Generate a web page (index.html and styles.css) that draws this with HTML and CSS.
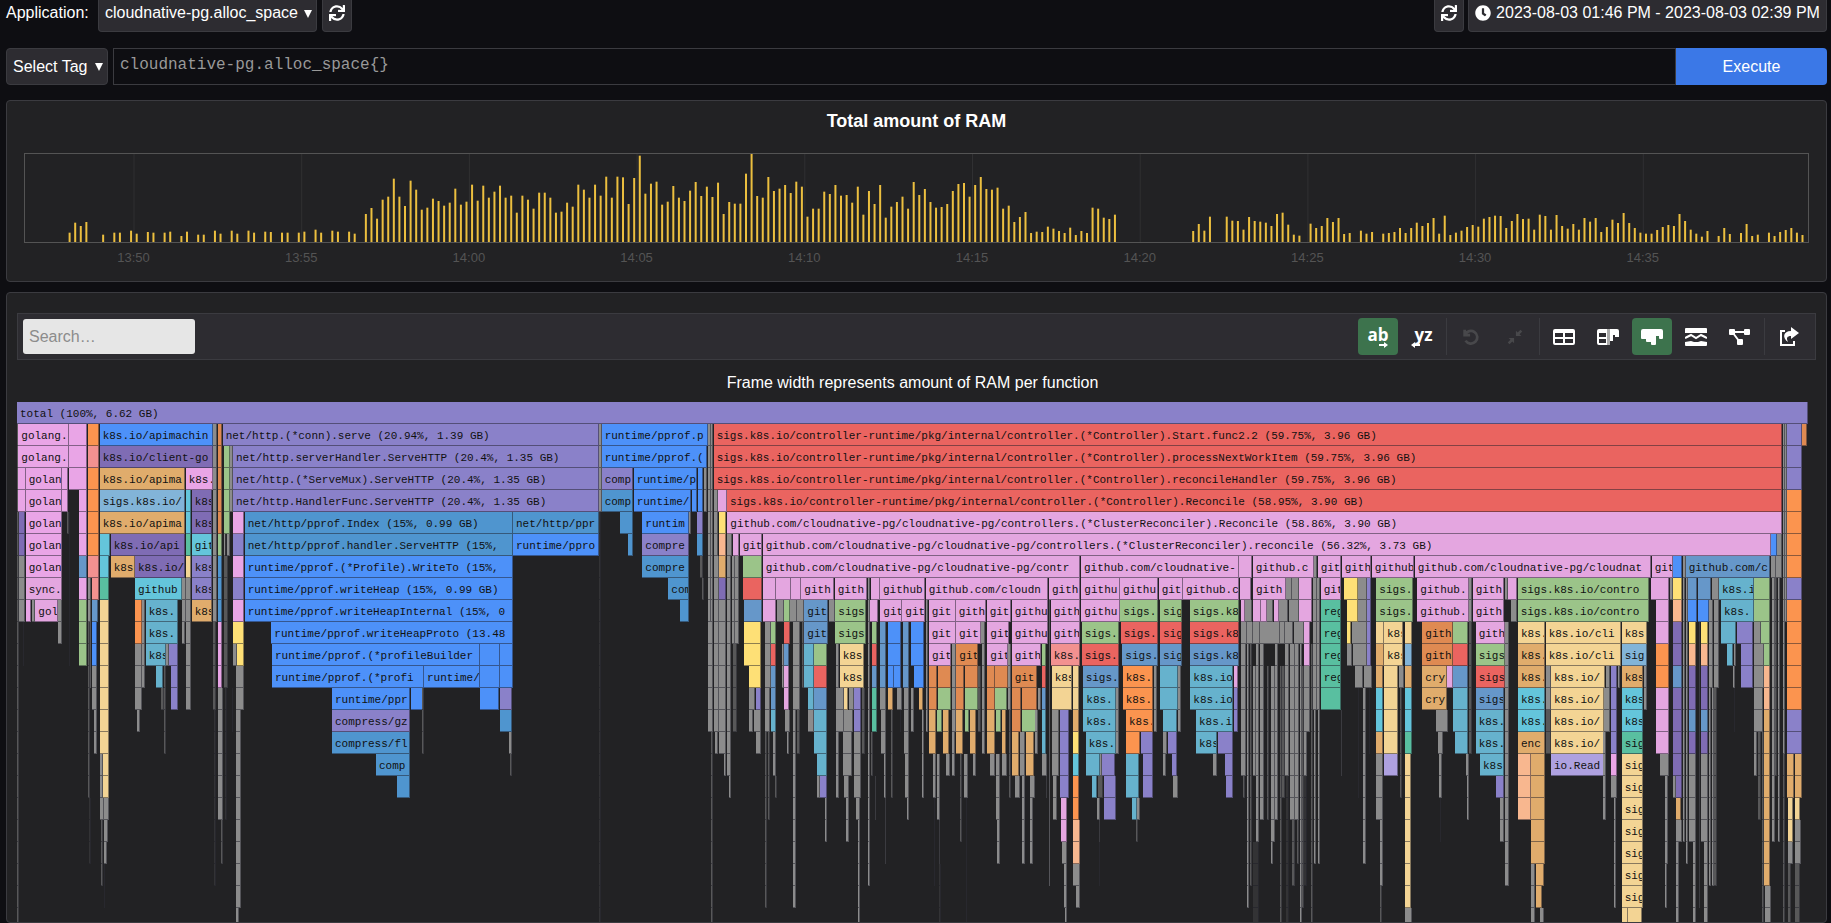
FILE: index.html
```html
<!DOCTYPE html>
<html lang="en">
<head>
<meta charset="utf-8">
<title>cloudnative-pg.alloc_space</title>
<link rel="stylesheet" href="styles.css">
</head>
<body>
<svg class="defs" aria-hidden="true">
  <symbol id="sync" viewBox="0 0 512 512"><path d="M440.65 12.57l4 82.77A247.16 247.16 0 0 0 255.83 8C134.73 8 33.91 94.92 12.29 209.82A12 12 0 0 0 24.09 224h49.05a12 12 0 0 0 11.67-9.26 175.91 175.91 0 0 1 317-56.94l-101.46-4.86a12 12 0 0 0-12.57 12v47.41a12 12 0 0 0 12 12H500a12 12 0 0 0 12-12V12a12 12 0 0 0-12-12h-47.37a12 12 0 0 0-11.98 12.57zM255.83 432a175.61 175.61 0 0 1-146-77.8l101.8 4.87a12 12 0 0 0 12.57-12v-47.4a12 12 0 0 0-12-12H12a12 12 0 0 0-12 12V500a12 12 0 0 0 12 12h47.35a12 12 0 0 0 12-12.6l-4.15-82.57A247.17 247.17 0 0 0 255.83 504c121.11 0 221.93-86.92 243.55-201.82a12 12 0 0 0-11.8-14.18h-49.05a12 12 0 0 0-11.67 9.26A175.86 175.86 0 0 1 255.83 432z"/></symbol>
</svg>
<header class="topbar">
  <label class="app-label" for="app">Application:</label>
  <span class="dropdown app">
    <select id="app" class="control"><option>cloudnative-pg.alloc_space</option></select>
  </span>
  <button class="control square" type="button" aria-label="Refresh applications"><svg class="icon"><use href="#sync"/></svg></button>
  <span class="spacer"></span>
  <button class="control square" type="button" aria-label="Refresh data"><svg class="icon"><use href="#sync"/></svg></button>
  <button class="control range" type="button"><svg class="icon" viewBox="0 0 512 512"><path d="M256 8C119 8 8 119 8 256s111 248 248 248 248-111 248-248S393 8 256 8zm57.100 350.100L224.900 294c-3.100-2.300-4.900-5.900-4.900-9.700V116c0-6.600 5.400-12 12-12h48c6.600 0 12 5.400 12 12v137.700l63.500 46.200c5.400 3.900 6.500 11.400 2.600 16.800l-28.200 38.800c-3.900 5.300-11.400 6.500-16.800 2.600z"/></svg>2023-08-03 01:46 PM - 2023-08-03 02:39 PM</button>
</header>
<form class="query">
  <span class="dropdown tag">
    <select class="control" aria-label="Select tag"><option>Select Tag</option></select>
  </span>
  <input class="query-input" type="text" aria-label="Query" value="cloudnative-pg.alloc_space{}" spellcheck="false">
  <button class="execute" type="button">Execute</button>
</form>
<section class="panel timeline">
  <h1 class="panel-title">Total amount of RAM</h1>
  <svg class="chart" id="chart" role="img" aria-label="Total amount of RAM over time"></svg>
</section>
<section class="panel profile">
  <div class="toolbar">
    <input class="search" type="search" placeholder="Search…" aria-label="Search">
    <span class="spacer"></span>
    <button class="tool active" type="button" aria-label="Head first"><span class="tool-text">ab</span><svg class="arrow right" viewBox="0 0 10 6"><path d="M0 2h5V0l4 3-4 3V4H0z"/></svg></button>
    <button class="tool tail" type="button" aria-label="Tail first"><span class="tool-text">yz</span><svg class="arrow left" viewBox="0 0 10 6"><path d="M9 2H4V0L0 3l4 3V4h5z"/></svg></button>
    <i class="divider"></i>
    <button class="tool" type="button" disabled aria-label="Reset view"><svg viewBox="0 0 22 22"><path class="line" d="M4 3v6h6M4.500 8.500A7 7 0 1 1 5 15"/></svg></button>
    <button class="tool" type="button" disabled aria-label="Collapse nodes"><svg viewBox="0 0 22 22"><path d="M12 4v6h6l-2-2 3-3-2-2-3 3zM10 18v-6H4l2 2-3 3 2 2 3-3z"/></svg></button>
    <i class="divider"></i>
    <button class="tool" type="button" aria-label="Table"><svg viewBox="0 0 22 18"><path fill-rule="evenodd" d="M2 1h18a2 2 0 0 1 2 2v12a2 2 0 0 1-2 2H2a2 2 0 0 1-2-2V3a2 2 0 0 1 2-2zM2 5v4h8V5zM12 5v4h8V5zM2 11v4h8v-4zM12 11v4h8v-4z"/></svg></button>
    <button class="tool" type="button" aria-label="Table and flamegraph"><svg viewBox="0 0 22 18"><path fill-rule="evenodd" d="M2 1h8v16H2a2 2 0 0 1-2-2V3a2 2 0 0 1 2-2zM2 5v4h7V5zM2 11v4h7v-4z"/><path class="shade" d="M10 1h3v16h-3z"/><path d="M13 1h7a2 2 0 0 1 2 2v6h-4V7h-2v6h-3z"/></svg></button>
    <button class="tool active" type="button" aria-label="Flamegraph"><svg viewBox="0 0 22 18"><path d="M2 1h18a2 2 0 0 1 2 2v7a1 1 0 0 1-1 1h-2a1 1 0 0 1-1-1V8h-3v8a1 1 0 0 1-1 1h-3a1 1 0 0 1-1-1v-2H6a1 1 0 0 1-1-1v-2H1a1 1 0 0 1-1-1V3a2 2 0 0 1 2-2z"/></svg></button>
    <button class="tool" type="button" aria-label="Sandwich"><svg viewBox="0 0 22 18"><path d="M1 0h20a1 1 0 0 1 1 1v4H0V1a1 1 0 0 1 1-1zM0 14l6-1 3 1h4l3-1 6 1v3a1 1 0 0 1-1 1H1a1 1 0 0 1-1-1z"/><path class="line" d="M0 10l2-1 4-2 5 3 5-3 4 2 2 1"/></svg></button>
    <button class="tool" type="button" aria-label="Graph"><svg viewBox="0 0 22 18"><path d="M1 1h4a1 1 0 0 1 1 1v4a1 1 0 0 1-1 1H1a1 1 0 0 1-1-1V2a1 1 0 0 1 1-1zM16 1h4a1 1 0 0 1 1 1v4a1 1 0 0 1-1 1h-4a1 1 0 0 1-1-1V2a1 1 0 0 1 1-1zM9 11h4a1 1 0 0 1 1 1v4a1 1 0 0 1-1 1H9a1 1 0 0 1-1-1v-4a1 1 0 0 1 1-1z"/><path class="line" d="M5 4h11M4 5l6 8"/></svg></button>
    <i class="divider"></i>
    <button class="tool" type="button" aria-label="Export"><svg viewBox="0 0 22 20"><path class="line" d="M7 4H3v14h13v-4"/><path d="M13 0l8 6-8 6V9c-4 0-5 2-3 6-6-4-5-11 3-11z"/></svg></button>
  </div>
  <h2 class="graph-title">Frame width represents amount of RAM per function</h2>
  <div class="flame" id="flame"></div>
</section>
<script src="script.js"></script>
</body>
</html>
```
FILE: styles.css
```css
* { box-sizing: border-box; }

html { height: 100%; }

body {
  display: flex;
  flex-direction: column;
  height: 100vh;
  margin: 0;
  padding: 0 4px 0 6px;
  overflow: hidden;
  background: #0e0e12;
  color: #fff;
  font: 16px/20px "Liberation Sans", Arial, sans-serif;
}

button, input, select { font: inherit; color: inherit; margin: 0; }

.defs { position: absolute; width: 0; height: 0; }
.spacer { flex: 1; }

.icon { width: 16px; height: 16px; fill: #fff; flex: none; }

.control {
  display: flex;
  align-items: center;
  justify-content: center;
  height: 100%;
  padding: 0 7px;
  border: 1px solid #3b3b40;
  border-radius: 4px;
  background: #2d2c31;
  appearance: none;
}

.dropdown { position: relative; display: block; height: 100%; }
.dropdown .control { width: 100%; padding: 0 6px; }
.dropdown::after {
  content: "";
  position: absolute;
  right: 5px;
  bottom: 14px;
  border: 4px solid transparent;
  border-top: 8px solid #fff;
  border-bottom: 0;
  pointer-events: none;
}

.topbar { display: flex; flex: none; align-items: stretch; height: 32px; }
.topbar .control { border-top: 0; border-radius: 0 0 4px 4px; padding-bottom: 6px; }
.topbar .app .control { padding-bottom: 5px; }
.app-label { width: 92px; line-height: 26px; }
.app { width: 219px; margin-right: 5px; }
.square { width: 30px; }
.range { margin-left: 4px; gap: 5px; width: 359px; padding: 0 6px; }

.query { display: flex; flex: none; height: 37px; margin: 16px 0 15px; }
.tag { width: 102px; margin-right: 5px; }
.query-input {
  flex: 1;
  min-width: 0;
  padding: 0 6px 4px;
  border: 1px solid #3b3b40;
  border-radius: 0;
  background: #0e0e12;
  color: #999;
  font-family: "Liberation Mono", monospace;
}
.execute {
  width: 151px;
  border: 0;
  border-radius: 0 4px 4px 0;
  background: #3b78e7;
}

.panel {
  background: #222224;
  border: 1px solid #3b3b40;
  border-radius: 4px;
}

.timeline { flex: none; height: 182px; margin-bottom: 10px; padding: 10px 17px 0; }
.panel-title { margin: 0 0 22px; font-size: 18px; line-height: 20px; text-align: center; }
.chart { display: block; width: 100%; height: 120px; overflow: visible; }
.chart .frame { fill: none; stroke: #545454; width: calc(100% - 1px); }
.chart .grid { fill: #303032; }
.chart .bar { fill: #ecbf3f; }
.chart text { fill: #545454; font-size: 13px; text-anchor: middle; }

.profile { flex: 1; min-height: 0; padding: 20px 10px 0; overflow: hidden; }
.toolbar {
  display: flex;
  align-items: center;
  gap: 4px;
  height: 47px;
  padding: 0 6px 0 5px;
  border: 1px solid #3b3b40;
  background: #2d2c31;
}
.search {
  width: 172px;
  height: 35px;
  padding: 0 6px;
  border: 0;
  border-radius: 3px;
  background: #e6e6e6;
  color: #222;
}
.search::placeholder { color: #8c8c8c; }
.tool {
  position: relative;
  display: flex;
  align-items: center;
  justify-content: center;
  width: 40px;
  height: 37px;
  padding: 0;
  border: 0;
  border-radius: 4px;
  background: none;
}
.tool.active { background: #3d734d; }
.tool svg { width: 22px; height: 20px; fill: #fff; }
.tool:disabled svg { fill: #48484b; width: 20px; }
.tool .line { fill: none; stroke: #fff; stroke-width: 2; }
.tool:disabled .line { stroke: #48484b; stroke-width: 3; }
.tool .shade { fill: #aaa; }
.tool-text { font: 700 17px/20px "Open Sans", sans-serif; padding-bottom: 4px; }
.tail .tool-text { padding-left: 3px; }
.tool .arrow { position: absolute; bottom: 7px; width: 10px; height: 6px; }
.tool .right { right: 9px; }
.tool .left { left: 9px; }
.divider { width: 1px; height: 37px; background: #3b3b40; }

.graph-title { margin: 11px 8px 7px 0; font-size: 16px; font-weight: 400; line-height: 24px; text-align: center; }

.flame { margin-right: 8px; }
.row { position: relative; height: 22px; overflow: hidden; }
.cell {
  position: absolute;
  top: 0;
  height: 100%;
  padding-left: 3px;
  overflow: hidden;
  border: 0 solid rgba(30, 30, 40, .5);
  border-width: 0 1px 1px 0;
  color: #111;
  font: 11px/24px "Liberation Mono", monospace;
  white-space: pre;
}
```
FILE: script.js
```js
const NS = 'http://www.w3.org/2000/svg';
const chart = document.getElementById('chart');

function svg(tag, attrs, text) {
  const el = document.createElementNS(NS, tag);
  for (const k in attrs) el.setAttribute(k, attrs[k]);
  if (text) el.textContent = text;
  chart.appendChild(el);
}

const SPAN = 1785;
const BASE = 89;
const pct = (v, total) => (v / total * 100).toFixed(3) + '%';

// first sample slot, then consecutive heights in thirds of a pixel
const samples = [
  [0, 28, 58, 48, 60], [6, 22], [8, 28, 28], [11, 34, 25], [14, 30, 28], [17, 28, 31],
  [20, 18, 31], [23, 22, 22], [26, 34, 25], [29, 34, 25], [32, 34, 28], [35, 31, 30],
  [38, 28, 28], [41, 28, 31], [44, 37, 28], [47, 34, 31], [50, 31, 25],
  [53, 84, 102, 70, 127, 136, 190, 136, 108, 184, 157, 97, 103, 130, 123, 109, 118, 160, 112,
    121, 172, 124, 169, 133, 151, 169, 133, 139, 88, 139, 127, 100, 148, 148, 133, 88, 91, 118,
    106, 172, 157, 133, 172, 139, 196, 133, 196],
  [99, 194, 114, 192, 259, 145, 175, 181, 112, 121, 168, 133, 123, 154, 180, 138, 166, 135, 178,
    84, 120, 115, 115, 205, 264, 138, 133, 195, 153, 160, 171, 147, 181, 166, 76, 100, 100, 151,
    144, 171, 139, 141, 118, 166, 82, 153, 114, 171, 73, 106, 120, 136, 100, 180, 141, 159, 120,
    103, 105, 114, 153, 174, 177, 136, 171, 195, 159, 157, 163, 100, 109, 60, 75, 90, 27, 31, 30,
    46, 40, 33, 27, 43, 21, 33, 27, 103, 100, 73, 69, 82],
  [201, 33, 54, 34, 76], [207, 76, 64, 63, 37, 75, 63, 61, 58, 48, 84, 88, 52, 22, 19],
  [222, 55, 42, 48, 72, 60, 72, 24, 27], [231, 34, 25, 30],
  [235, 25, 27, 30, 42, 27, 42, 58, 48, 57, 72, 25, 79, 21, 28, 34, 45, 51, 46, 70, 75, 79, 78,
    42, 63, 84, 69, 70, 37, 82, 78, 37, 81, 48, 40, 54, 37, 72, 61, 72, 30, 45, 67, 57, 87, 57,
    42, 28, 25, 25, 36, 45, 51, 48, 84, 63, 37, 25, 16, 33],
  [295, 18, 42, 24], [299, 27, 54, 18, 22], [304, 28, 18, 30, 36, 42, 28, 21],
];

for (let i = 0; i < 10; i++) {
  const x = 109.5 + i * 167.7;
  svg('rect', { class: 'grid', x: pct(x, SPAN), y: 1, width: 1, height: BASE - 1 });
  const minutes = 50 + i * 5;
  const label = (13 + Math.floor(minutes / 60)) + ':' + String(minutes % 60).padStart(2, '0');
  svg('text', { x: pct(x, SPAN), y: 109 }, label);
}
for (const [start, ...heights] of samples) {
  heights.forEach((h, i) => {
    const x = 44.6 + (start + i) * 5.59;
    svg('rect', { class: 'bar', x: pct(x, SPAN), y: BASE - h / 3, width: 2, height: h / 3 });
  });
}
svg('rect', { class: 'frame', x: 0.5, y: 0.5, height: BASE });

const COLORS = {
  P: '#8a81c9', K: '#e9a5e6', G: '#e4a6e0', B: '#4d91f9', U: '#4f95cf', R: '#ea6460',
  O: '#fb944f', o: '#df8a52', T: '#e0ac6c', W: '#f3d494', V: '#7f6cb4', C: '#64c5db',
  c: '#66b2cd', g: '#9bc489', e: '#59bfa0', S: '#6697c9', L: '#82b4d8', Y: '#fee076',
  p: '#f8b78f', s: '#f29190', l: '#aea1e0', x: '#8c8c8c', d: '#585859', f: '#333335',
};

// Each line: left, right, first row, last row, colour, label.
// Left and right are ticks counted from the group's own origin.
const TICKS = 5373;
const groups = [
[-51, `
51 5424 0 0 P total (100%, 6.62 GB)
51 57 1 23 d
55 206 1 2 K golang.
207 262 1 3 K
263 298 1 1 O
299 639 1 1 B k8s.io/apimachin
639 652 1 6 x
653 667 1 5 o
668 1796 1 1 P net/http.(*conn).serve (20.94%, 1.39 GB)
263 298 2 2 s
299 639 2 2 V k8s.io/client-go
671 690 2 5 g
691 699 2 4 x
699 1796 2 2 P net/http.serverHandler.ServeHTTP (20.4%, 1.35 GB)
55 77 3 4 K
77 187 3 7 K golan
187 205 3 4 K
263 298 3 6 O
299 556 3 3 T k8s.io/apima
557 639 3 3 K k8s.
699 1796 3 3 P net/http.(*ServeMux).ServeHTTP (20.4%, 1.35 GB)
238 260 4 6 K
299 556 4 4 L sigs.k8s.io/
557 574 4 5 C
575 637 4 5 V k8s
699 1796 4 4 P net/http.HandlerFunc.ServeHTTP (20.4%, 1.35 GB)
56 74 5 6 V
200 206 5 5 d
299 556 5 5 T k8s.io/apima
699 733 5 5 K
734 1538 5 5 U net/http/pprof.Index (15%, 0.99 GB)
1539 1796 5 5 U net/http/ppr
299 331 6 6 C
332 556 6 6 V k8s.io/api
557 574 6 6 e
575 637 6 6 C git
653 667 6 6 g
672 690 6 6 x
699 733 6 6 P
734 1538 6 6 U net/http/pprof.handler.ServeHTTP (15%,
1539 1796 6 6 B runtime/ppro
56 74 7 9 x
238 260 7 7 S
263 298 7 7 s
299 328 7 7 C
332 404 7 7 T k8s
405 556 7 7 V k8s.io/
557 573 7 7 W
575 637 7 8 P k8s
639 650 7 9 x
653 667 7 9 U
699 733 7 7 K
734 1538 7 7 B runtime/pprof.(*Profile).WriteTo (15%,
77 187 8 8 G sync.
238 260 8 8 K
263 274 8 12 x
275 296 8 8 s
299 328 8 8 e
405 545 8 8 C github
545 557 8 9 x
557 573 8 9 x
699 733 8 8 P
734 1538 8 8 B runtime/pprof.writeHeap (15%, 0.99 GB)
78 94 9 9 K
95 105 9 9 x
106 173 9 9 G gol
173 187 9 10 x
238 260 9 11 g
275 295 9 9 S
299 328 9 15 W
405 425 9 10 O
426 436 9 12 x
437 534 9 10 c k8s.
575 637 9 9 T k8s
699 733 9 9 K
734 1538 9 9 B runtime/pprof.writeHeapInternal (15%, 0
69 73 10 11 f
206 210 5 11 f
275 292 10 11 B
545 556 10 10 x
557 573 10 13 x
653 666 10 12 K
699 732 10 10 Y
814 1538 10 10 B runtime/pprof.writeHeapProto (13.48
405 425 11 13 x
437 497 11 11 c k8s
498 507 11 11 x
508 534 11 11 P
700 711 11 11 x
712 731 11 11 Y
816 1440 11 11 B runtime/pprof.(*profileBuilder
1440 1500 11 12 B
1500 1538 11 12 B
467 490 12 12 c
484 491 13 13 d
491 498 12 15 d
514 533 12 13 P
275 292 12 13 x
709 731 12 13 x
816 1271 12 12 B runtime/pprof.(*profi
1272 1440 12 12 B runtime/
996 1231 13 13 B runtime/ppr
1232 1268 13 13 B
1267 1272 13 15 d
1441 1498 13 13 B
1499 1537 13 13 P
1500 1537 14 14 U
1526 1536 15 15 x
1530 1536 16 16 d
281 291 14 15 x
410 419 14 14 x
996 1231 14 14 P compress/gz
996 1231 15 15 U compress/fl
1128 1231 16 16 U comp
1191 1231 17 17 U
264 271 10 17 d
267 272 18 20 f
300 309 16 17 x
310 328 16 17 W
300 311 18 18 x
312 328 18 18 x
302 310 19 21 d
313 325 19 19 x
313 321 20 20 x
311 314 21 22 f
653 668 13 18 x
662 668 19 20 d
640 648 10 13 d
643 647 14 21 f
676 680 6 18 f
672 684 7 12 d
709 724 14 22 x
708 716 23 23 x
697 700 13 14 f
`],
[1299, `
446 455 1 4 x
448 452 5 23 f
455 773 1 1 B runtime/pprof.p
455 770 2 2 B runtime/pprof.(
455 550 3 3 P comp
551 742 3 3 B runtime/p
743 760 3 4 B
761 770 3 4 x
455 550 4 4 U comp
551 724 4 4 B runtime/
725 742 4 4 B
511 550 5 5 U
534 550 6 6 U
577 716 5 5 B runtim
577 716 6 6 P compre
577 716 7 7 U compre
655 716 8 8 U com
691 716 9 9 U
716 724 5 5 x
742 760 5 5 P
742 760 6 6 U
751 760 7 7 d
756 761 8 8 d
774 783 1 9 x
783 790 1 9 x
791 3997 1 1 R sigs.k8s.io/controller-runtime/pkg/internal/controller.(*Controller).Start.func2.2 (59.75%, 3.96 GB)
791 3997 2 2 R sigs.k8s.io/controller-runtime/pkg/internal/controller.(*Controller).processNextWorkItem (59.75%, 3.96 GB)
791 3997 3 3 R sigs.k8s.io/controller-runtime/pkg/internal/controller.(*Controller).reconcileHandler (59.75%, 3.96 GB)
791 805 4 6 x
805 830 4 4 G
831 3997 4 4 R sigs.k8s.io/controller-runtime/pkg/internal/controller.(*Controller).Reconcile (58.95%, 3.90 GB)
807 829 5 5 Y
832 3995 5 5 G github.com/cloudnative-pg/cloudnative-pg/controllers.(*ClusterReconciler).Reconcile (58.86%, 3.90 GB)
807 829 6 6 p
830 847 6 6 x
848 868 6 6 G
869 937 6 6 G git
938 3963 6 6 G github.com/cloudnative-pg/cloudnative-pg/controllers.(*ClusterReconciler).reconcile (56.32%, 3.73 GB)
808 828 7 7 T
880 936 7 7 g
938 1891 7 7 G github.com/cloudnative-pg/cloudnative-pg/contr
808 828 8 8 V
880 936 8 8 R
`],
[2049, `
25 38 10 14 x
33 39 15 23 d
41 56 7 14 x
45 55 15 15 x
58 77 9 15 x
71 77 16 16 x
80 92 7 16 x
88 93 17 17 x
95 104 7 10 x
105 118 7 10 x
98 110 11 14 d
131 185 9 9 S
131 184 10 11 Y
146 184 12 12 Y
147 166 13 13 x
167 182 13 13 P
148 160 14 14 x
163 184 14 14 x
169 184 15 15 x
190 228 8 9 G
229 273 8 8 G
274 303 8 8 G
304 403 8 8 G gith
404 502 8 8 G gith
503 511 8 8 x
512 539 8 8 G
540 676 8 8 G github
677 1045 8 8 G github.com/cloudn
1047 1140 8 8 G gith
232 252 9 9 x
253 269 9 9 g
270 290 9 9 x
290 312 9 9 x
313 384 9 10 S git
386 404 9 9 x
406 498 9 10 g sigs
511 533 9 9 G
541 606 9 9 G git
607 676 9 9 G git
686 767 9 9 G git
767 859 9 9 G gith
860 934 9 9 G git
935 1045 9 10 G githu
1052 1140 9 10 G gith
195 212 10 12 x
213 227 10 10 g
253 269 10 10 R
280 300 10 13 x
515 531 10 10 g
541 558 10 12 S
564 604 10 11 B
608 626 10 12 S
633 673 10 11 B
686 767 10 10 G git
768 843 10 10 G git
844 856 10 10 x
862 927 10 10 G git
213 227 11 11 R
253 268 11 11 S
313 341 11 12 c
342 382 11 11 g
408 418 11 12 x
419 491 11 12 W k8s
515 531 11 11 R
687 754 11 11 G git
755 768 11 14 x
769 833 11 11 o git
862 923 11 11 G git
924 934 11 13 x
935 1024 11 11 G gith
1025 1038 11 11 g
1052 1140 11 11 s k8s.
213 227 12 13 S
253 268 12 13 G
342 382 12 12 R
515 531 12 12 S
564 582 12 12 B
583 604 12 12 B
642 671 12 12 B
687 712 12 13 o
713 754 12 12 o
769 793 12 13 o
794 833 12 12 o
862 885 12 13 o
886 923 12 12 o
935 1012 12 12 o git
1025 1038 12 12 R
1055 1117 12 12 W k8s
1118 1138 12 13 W
323 341 13 13 c
342 382 13 13 S
408 431 13 13 x
432 445 13 13 W
446 462 13 13 x
463 482 13 14 P
515 531 13 14 e
541 558 13 13 x
564 579 13 13 T
591 606 13 13 x
656 670 13 13 T
713 754 13 13 g
794 833 13 13 g
886 922 13 13 g
935 964 13 14 o
965 1012 13 13 o
1013 1024 13 13 x
1025 1038 13 13 S
1055 1117 13 13 W
195 210 13 14 x
213 227 14 14 c
256 270 14 14 x
323 341 14 14 x
342 382 14 15 c
408 432 14 14 x
432 460 14 14 x
687 709 14 15 T
712 726 14 14 g
728 748 14 15 T
769 789 14 15 T
794 808 14 14 g
809 828 14 15 T
862 884 14 15 T
887 903 14 14 g
905 918 14 15 T
965 1012 14 14 g
1025 1038 14 15 c
1057 1078 14 16 x
1079 1107 14 17 P
1118 1138 14 14 T
935 957 15 16 T
960 975 15 16 x
977 1002 15 16 T
1118 1138 15 15 Y
351 381 16 16 c
1118 1138 16 16 C
351 360 17 17 x
361 381 17 17 P
1118 1138 17 18 O
1119 1139 19 20 p
1119 1140 21 21 x
1127 1140 22 22 x
1084 1102 18 19 G
1086 1100 20 20 x
1092 1101 21 22 x
1096 1101 23 23 x
195 202 15 22 d
203 210 15 18 d
218 228 15 16 x
226 231 17 17 d
246 252 11 12 x
260 268 15 15 x
280 288 14 22 x
290 300 14 15 d
305 311 10 12 d
374 382 18 19 x
408 418 15 17 x
430 455 15 16 x
432 446 17 17 x
438 446 18 19 x
463 482 15 17 x
468 480 18 18 x
474 480 19 23 x
485 495 13 15 d
503 509 9 21 x
514 520 15 16 d
524 528 17 18 d
543 558 14 15 x
551 558 16 17 x
554 558 18 20 d
573 580 14 17 d
600 603 14 14 f
612 627 13 15 x
616 627 16 17 x
620 626 18 18 x
634 641 13 14 x
665 671 14 17 x
677 684 9 14 x
699 708 16 17 x
711 721 16 18 x
716 720 19 20 d
718 722 21 23 f
703 706 18 21 f
738 750 16 16 x
755 764 15 16 x
780 786 16 19 d
791 803 16 17 x
797 802 18 23 f
818 829 16 16 x
835 842 12 14 d
845 855 11 15 x
870 885 16 16 x
888 900 16 18 x
892 900 19 20 x
905 920 16 16 x
926 932 14 17 d
945 960 17 17 x
966 974 17 20 x
989 1004 17 17 x
991 999 18 20 x
1004 1013 14 15 x
1025 1040 16 16 x
1038 1042 17 17 d
1046 1051 9 21 x
1060 1070 17 18 x
`],
[3189, `
3 477 7 7 G github.com/cloudnative-
478 517 7 7 G
518 701 7 7 G github.c
702 712 7 7 x
713 784 7 7 G git
785 874 7 7 G gith
875 1003 7 7 G github
1004 1714 7 7 G github.com/cloudnative-pg/cloudnat
4 119 8 9 G githu
120 235 8 8 G githu
236 308 8 8 G git
309 478 8 8 G github.c
479 514 8 8 G
519 617 8 8 G gith
618 636 8 8 x
637 657 8 8 x
658 697 8 9 G
698 710 8 13 x
711 721 8 13 x
722 784 8 8 G git
793 833 8 8 Y
834 860 8 9 x
861 873 8 11 P
889 1000 8 9 g sigs.
1012 1167 8 9 G github.
121 235 9 9 g sigs.
240 306 9 9 g sig
329 477 9 9 g sigs.k8
483 495 9 9 G
496 515 9 9 x
519 542 9 9 G
543 561 9 9 G
562 580 9 9 x
581 597 9 9 G
598 625 9 9 x
626 657 9 9 x
722 784 9 12 e reg
801 833 9 9 Y
5 117 10 10 g sigs.
122 235 10 10 R sigs.
240 306 10 10 R sig
329 477 10 10 R sigs.k8
484 500 10 10 x
501 518 10 10 x
519 540 10 10 x
541 600 10 10 x
601 615 10 10 x
616 640 10 10 x
641 671 10 10 x
672 690 10 11 G
800 814 10 10 Y
815 860 10 10 x
889 911 10 10 W
912 970 10 11 W k8s
974 996 10 10 W
1027 1118 10 11 o gith
1119 1165 10 10 g
5 117 11 11 R sigs.
127 234 11 11 S sigs.
240 305 11 11 S sig
329 477 11 11 S sigs.k8
802 817 11 11 x
818 860 11 11 x
889 911 11 11 T
974 996 11 11 L
1119 1165 11 11 R
8 116 12 12 S sigs.
128 220 12 13 O k8s.
221 230 12 14 x
241 293 12 13 c
294 302 12 14 x
331 460 12 13 c k8s.io
461 474 12 12 G
825 850 12 12 x
851 875 12 12 x
889 908 12 12 T
913 955 12 15 W
956 972 12 12 x
974 995 12 12 T
1027 1101 12 13 T cry
1102 1118 12 12 G
1119 1165 12 12 S
10 107 13 14 c k8s.
108 116 13 15 x
461 474 13 14 P
722 782 13 13 e
889 908 13 14 C
974 995 13 14 C
1119 1165 13 14 c
138 220 14 14 O k8s.
248 292 14 14 c
348 459 14 14 c k8s.i
1068 1103 14 14 x
17 107 15 15 c k8s.
138 181 15 15 O
182 219 15 15 P
249 262 15 15 x
263 290 15 15 P
348 412 15 15 c k8s
413 458 15 15 P
889 908 15 15 T
974 995 15 15 e
1126 1165 15 15 c
17 60 16 16 c
61 66 16 16 x
67 106 16 16 P
138 178 16 17 c
190 218 16 17 P
249 257 16 16 x
277 290 16 16 P
399 412 16 16 x
435 458 16 16 P
889 910 16 18 x
913 954 16 16 l
974 994 16 22 W
974 995 23 23 x
36 52 17 17 c
53 68 17 17 d
71 107 17 18 P
279 293 17 17 x
438 458 17 17 P
157 171 18 18 c
172 179 18 18 x
52 60 18 18 x
56 60 19 19 d
56 60 20 21 f
168 173 19 19 d
484 498 11 16 x
488 494 17 17 d
500 508 11 22 x
509 516 11 21 d
519 527 12 16 x
528 536 11 19 x
519 536 20 23 f
541 551 11 18 x
560 567 12 18 d
572 584 12 19 x
573 580 20 20 x
586 594 11 18 x
600 606 12 23 d
607 614 12 17 d
615 628 11 16 x
618 627 17 23 f
630 644 11 18 x
637 644 19 21 d
645 658 11 18 x
652 658 19 20 d
659 665 11 23 x
666 671 12 22 d
672 689 12 14 x
672 682 15 16 x
672 680 17 21 f
693 700 11 23 d
702 708 14 20 x
714 721 14 20 x
782 786 14 16 d
835 838 13 17 f
850 858 13 20 x
866 869 13 15 f
901 910 19 21 x
901 906 22 23 d
960 966 13 17 d
1074 1088 15 15 x
1078 1085 16 17 x
1080 1083 18 19 f
`],
[4269, `
1028 1034 1 15 x
1035 1041 1 9 x
1042 1085 1 3 P
1086 1102 1 1 o
1042 1085 4 7 O
1042 1085 8 8 P
1042 1085 9 13 O
1042 1085 14 15 P
1042 1063 16 17 T
1064 1085 16 17 T
1043 1058 18 19 W
1064 1080 18 18 W
1043 1060 20 20 x
1064 1082 19 20 x
1043 1052 21 23 d
1066 1080 21 23 d
1030 1036 16 23 d
994 1011 6 6 B
1012 1026 6 6 x
635 699 7 7 G git
700 727 7 7 B
728 737 7 7 x
737 991 7 7 S github.com/c
992 1008 7 7 x
1009 1026 7 7 x
88 97 8 9 x
98 193 8 9 G gith
194 204 8 8 x
205 232 8 8 G
233 628 8 9 g sigs.k8s.io/contro
634 688 8 8 G
689 699 8 8 x
700 726 8 8 Y
744 772 8 8 S
773 814 8 8 S
815 836 8 8 x
837 942 8 8 c k8s.i
943 991 8 9 g
214 232 9 9 x
648 687 9 10 G
700 726 9 9 p
744 770 9 9 B
773 806 9 9 B
807 820 9 12 x
821 836 9 12 x
843 942 9 9 c k8s.
107 195 10 10 G gith
234 316 10 10 W k8s.
317 542 10 11 W k8s.io/cli
545 622 10 10 W k8s
700 726 10 11 V
748 768 10 10 Y
782 805 10 10 Y
843 889 10 10 c
890 940 10 10 P
941 963 10 10 x
964 990 10 10 g
107 195 11 11 g sigs
234 316 11 12 T k8s.
545 622 11 11 L sig
648 687 11 12 O
748 768 11 11 p
782 805 11 11 p
862 880 11 11 c
881 889 11 11 x
903 940 11 12 P
941 972 11 12 x
973 990 11 11 g
107 195 12 12 R sigs
318 332 12 13 x
318 332 14 15 d
333 496 12 12 W k8s.io/
497 511 12 12 x
492 511 13 14 x
512 532 12 15 P
533 540 12 12 x
545 610 12 12 T k8s
611 622 12 13 x
700 726 12 12 S
748 768 12 13 V
782 804 12 13 V
973 990 12 13 p
942 970 13 14 x
107 193 13 13 S sigs
234 315 13 14 C k8s.
333 491 13 15 W k8s.io/
545 610 13 14 C k8s
648 687 13 15 G
700 726 13 16 V
107 191 14 15 c k8s.
748 768 14 14 S
782 804 14 14 S
973 990 14 21 T
234 315 15 15 T enc
545 610 15 15 e sig
748 768 15 15 V
782 804 15 15 V
120 191 16 16 c k8s
234 273 16 18 p
274 314 16 20 T
333 491 16 16 l io.Read
512 530 16 16 K
545 610 16 22 W sig
661 687 16 16 x
168 191 17 17 P
513 531 17 17 x
674 684 17 20 x
674 680 21 22 x
700 707 17 17 x
707 725 17 17 V
707 723 18 18 T
707 726 19 19 x
708 718 20 23 x
180 193 18 19 x
195 206 10 21 x
274 286 21 23 x
287 311 21 21 T
287 305 22 22 T
300 311 23 23 x
547 563 23 23 W
563 606 23 23 W
522 528 18 22 x
490 497 15 18 x
728 735 8 19 x
737 743 8 20 x
748 768 16 19 x
759 768 20 23 x
777 781 10 22 d
782 804 16 19 x
792 804 20 23 x
807 814 13 21 x
815 821 13 21 x
823 830 13 21 d
942 952 15 16 x
953 962 15 18 d
966 972 15 23 d
974 992 22 23 x
997 1005 8 19 x
1006 1011 8 16 d
1013 1021 8 19 x
78 87 16 16 x
82 87 17 18 x
86 95 10 15 d
878 884 12 12 x
882 885 13 14 f
`],
];

const flame = document.getElementById('flame');
const rows = Array.from({ length: 24 }, () => {
  const row = document.createElement('div');
  row.className = 'row';
  flame.appendChild(row);
  return row;
});

for (const [origin, text] of groups) {
  for (const line of text.trim().split('\n')) {
    const [, left, right, first, last, color, label] =
      line.match(/^(\d+) (\d+) (\d+) (\d+) (\w) ?(.*)$/);
    for (let r = +first; r <= +last; r++) {
      const cell = document.createElement('div');
      cell.className = 'cell';
      cell.style.left = pct(+left + origin, TICKS);
      cell.style.width = pct(right - left, TICKS);
      cell.style.background = COLORS[color];
      if (!label) cell.style.padding = 0;
      cell.textContent = label;
      rows[r].appendChild(cell);
    }
  }
}
```
